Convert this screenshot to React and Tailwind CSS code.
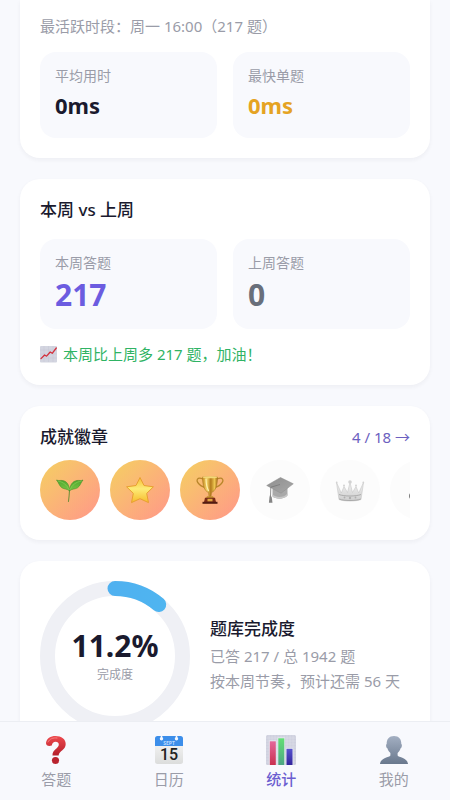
import React from "react";

function Card({ className = "", children }) {
  return (
    <section className={`rounded-[20px] bg-white p-5 shadow-[0_2px_4px_rgba(30,30,60,0.05)] ${className}`}>
      {children}
    </section>
  );
}

function Stat({ label, value, className }) {
  return (
    <div className="rounded-2xl bg-[#f8f9fd] px-[15px] pt-[15px] pb-3">
      <div className="text-[14px] leading-[18px] text-[#9a9ca8]">{label}</div>
      <div className={`font-bold ${className}`}>{value}</div>
    </div>
  );
}

function TrendIcon() {
  return (
    <svg className="h-[17px] w-[17px] shrink-0" viewBox="0 0 17 17" aria-hidden="true">
      <rect width="17" height="16.4" rx="1" fill="#d3d5e0" />
      <path d="M0 4h17M0 8h17M0 12h17M4 0v16M8.5 0v16M13 0v16" stroke="#c4c7d4" strokeWidth=".5" />
      <path d="M1 12.6L4.600 9l2 1.200L10.200 6l2 1.300L16.300 2" fill="none" stroke="#d3303c" strokeWidth="1.300" strokeLinejoin="round" strokeLinecap="round" />
    </svg>
  );
}

function Sprout() {
  return (
    <>
      <path d="M29.5 30C29.3 34 29 38 28.5 41.5" fill="none" stroke="#6b8f35" strokeWidth="1" strokeLinecap="round" />
      <path d="M16.5 20C18.500 21 20 20.200 22.500 20.500C27 21.200 29.300 25 29.500 30.800C26.500 28.500 24.500 29.300 22 27.800C19.200 26 18.800 22.500 16.500 20Z" fill="url(#leaf)" stroke="#3f8f27" strokeWidth=".6" />
      <path d="M43 20C41 21 39.500 20.200 37 20.500C32.500 21.200 29.900 25 29.500 30.800C32.500 28.500 35 29.300 37.500 27.800C40.300 26 40.700 22.500 43 20Z" fill="url(#leaf)" stroke="#3f8f27" strokeWidth=".6" />
      <path d="M18 21C23 22 27 25 29.3 30M41.5 21C36 22 32 25 29.700 30" fill="none" stroke="#8fd45c" strokeWidth=".6" />
    </>
  );
}

function Star() {
  return (
    <path
      d="M30 17.5L34 25.500L43.400 26.800L36.700 33.400L38.500 42.600L30 38.700L21.500 42.600L23.300 33.400L16.600 26.800L26 25.500Z"
      fill="url(#star)" stroke="#e8a030" strokeWidth="1" strokeLinejoin="round"
    />
  );
}

function Trophy() {
  return (
    <>
      <path d="M23 19C17 16.5 15.5 20.5 19 24C20.8 26 22.5 26.5 24.5 27.5M37 19C43 16.5 44.5 20.5 41 24C39.2 26 37.5 26.5 35.5 27.5" fill="none" stroke="#b9862a" strokeWidth="1.300" />
      <path d="M22.5 17H37.5C37.5 25.5 35.5 31 31.5 32.5L31 36.5H29L28.5 32.5C24.5 31 22.5 25.5 22.5 17Z" fill="url(#cup)" stroke="#a06c18" strokeWidth=".5" />
      <ellipse cx="30" cy="17.2" rx="7.5" ry="1" fill="#f3d878" />
      <path d="M26 19C26.2 24 27 28 28.5 30.5" fill="none" stroke="#fff0ae" strokeWidth="1.200" strokeLinecap="round" />
      <path d="M27 36.2H33L34 38H26Z" fill="#c28f2c" />
      <path d="M25 37.8H35L36 42H24Z" fill="#7b2c17" />
      <path d="M22.5 41.8H37.5V43.8H22.5Z" fill="#521c11" />
      <rect x="27.5" y="38.8" width="5" height="2.5" fill="#dfa842" />
    </>
  );
}

function GraduationCap() {
  return (
    <>
      <path d="M22.5 29V36.5C26 39.5 34 39.5 37.5 35.5V27Z" fill="#a9a9a9" />
      <path d="M22.5 34.5C26 38 34 38 37.5 33.5V35.5C34 39.5 26 39.5 22.5 36.5Z" fill="#c7c7c7" />
      <path d="M16.7 25.5L30.5 17.5L43.3 23.8L31 33.2Z" fill="url(#cap)" stroke="#8c8c8c" strokeWidth=".5" />
      <path d="M30 24.5L20.8 27.2L20.5 36" fill="none" stroke="#777" strokeWidth=".8" />
      <path d="M20 35L21.7 37L22.5 42.8H18.9L19.5 37Z" fill="#858585" />
    </>
  );
}

function Crown() {
  return (
    <>
      <path d="M16.5 22.5L21.300 33L24 26.5L27.5 32.500L30 22.500L32.5 32.500L36 26.5L38.700 33L43.5 22.5L41 39.5C36 41.5 24 41.5 19 39.5Z" fill="url(#crown)" stroke="#c6c6c6" strokeWidth=".6" strokeLinejoin="round" />
      <path d="M19 34.500C24 36.5 36 36.5 41 34.500M19.2 39C24 41 36 41 40.8 39" fill="none" stroke="#a6a6a6" strokeWidth=".9" />
      <g fill="#d2d2d2">
        <circle cx="16.7" cy="22.5" r=".9" />
        <circle cx="24" cy="25.5" r="1" />
        <circle cx="30" cy="22" r="1.800" />
        <circle cx="36" cy="25.5" r="1" />
        <circle cx="43.3" cy="22.5" r=".9" />
      </g>
      <g fill="#b0b0b0">
        <circle cx="24.5" cy="37.500" r=".9" />
        <circle cx="30" cy="38" r="1.200" />
        <circle cx="35.5" cy="37.500" r=".9" />
      </g>
    </>
  );
}

function Bomb() {
  return <ellipse cx="25" cy="36" rx="6" ry="5" fill="#777" />;
}

const badges = [
  { id: "sprout", Icon: Sprout, unlocked: true },
  { id: "star", Icon: Star, unlocked: true },
  { id: "trophy", Icon: Trophy, unlocked: true },
  { id: "cap", Icon: GraduationCap, unlocked: false },
  { id: "crown", Icon: Crown, unlocked: false },
  { id: "bomb", Icon: Bomb, unlocked: false },
];

function BadgeGradients() {
  return (
    <svg className="absolute h-0 w-0" aria-hidden="true">
      <defs>
        <linearGradient id="leaf" x1="0" y1="0" x2="0" y2="1">
          <stop offset="0" stopColor="#4fa52f" />
          <stop offset="1" stopColor="#79c844" />
        </linearGradient>
        <linearGradient id="star" x1="0" y1="0" x2="0" y2="1">
          <stop offset="0" stopColor="#f7bd35" />
          <stop offset=".45" stopColor="#fdec78" />
          <stop offset="1" stopColor="#f6bb2c" />
        </linearGradient>
        <linearGradient id="cup" x1="0" y1="0" x2="1" y2="0">
          <stop offset="0" stopColor="#c68e24" />
          <stop offset=".3" stopColor="#f5d468" />
          <stop offset=".55" stopColor="#b47a1c" />
          <stop offset=".8" stopColor="#edc550" />
          <stop offset="1" stopColor="#a8701a" />
        </linearGradient>
        <linearGradient id="cap" x1="0" y1="0" x2="1" y2="1">
          <stop offset="0" stopColor="#8e8e8e" />
          <stop offset="1" stopColor="#a8a8a8" />
        </linearGradient>
        <linearGradient id="crown" x1="0" y1="0" x2="0" y2="1">
          <stop offset="0" stopColor="#f0f0f0" />
          <stop offset="1" stopColor="#cecece" />
        </linearGradient>
      </defs>
    </svg>
  );
}

function ProgressRing({ percent }) {
  const radius = 67.5;
  const length = 2 * Math.PI * radius;
  return (
    <div className="relative h-[150px] w-[150px] shrink-0">
      <svg viewBox="0 0 150 150" className="h-full w-full -rotate-90" aria-hidden="true">
        <defs>
          <linearGradient id="ring" x1="0" y1="0" x2="0" y2="1">
            <stop offset="0" stopColor="#4facf0" />
            <stop offset="1" stopColor="#4fb6f0" />
          </linearGradient>
        </defs>
        <circle cx="75" cy="75" r={radius} fill="none" stroke="#eff0f5" strokeWidth="15" />
        <circle
          cx="75" cy="75" r={radius} fill="none" stroke="url(#ring)" strokeWidth="15" strokeLinecap="round"
          strokeDasharray={`${(length * percent) / 100} ${length}`}
        />
      </svg>
      <div className="absolute inset-0 flex flex-col items-center justify-center">
        <div className="text-[30px] leading-[38px] font-bold text-[#1a1a2e]">{percent}%</div>
        <div className="text-[12px] leading-5 text-[#9a9ca8]">完成度</div>
      </div>
    </div>
  );
}

function QuestionIcon() {
  return (
    <>
      <defs>
        <linearGradient id="question" x1="0" y1="0" x2="0" y2="1">
          <stop offset="0" stopColor="#ee4a4e" />
          <stop offset="1" stopColor="#b51f2b" />
        </linearGradient>
      </defs>
      <path d="M5 8C5.5 3.5 9.5 1 14.5 1C20.5 1 24.7 4 24.7 9C24.7 15 18.200 15.500 17.600 20.5H11.500C11.2 14.500 17.800 13.500 17.800 9.5C17.800 7.700 16.500 6.800 14.600 6.800C12.500 6.800 11.300 8 10.800 10.500C7.5 11.500 5 10.5 5 8Z" fill="url(#question)" />
      <circle cx="14.5" cy="25.500" r="3.600" fill="#b9232e" />
      <path d="M7 7C8.5 3.8 12 2.5 16 3" fill="none" stroke="#f78180" strokeWidth="1" strokeLinecap="round" />
    </>
  );
}

function CalendarIcon() {
  return (
    <>
      <defs>
        <linearGradient id="paper" x1="0" y1="0" x2="0" y2="1">
          <stop offset="0" stopColor="#fafafa" />
          <stop offset="1" stopColor="#dcdddc" />
        </linearGradient>
      </defs>
      <rect x="1" y="1" width="28" height="28" rx="2.5" fill="url(#paper)" />
      <path d="M1 11V3.5A2.5 2.5 0 0 1 3.5 1H26.5A2.5 2.5 0 0 1 29 3.5V11Z" fill="#3c8eea" />
      <circle cx="7.5" cy="3.8" r="1.700" fill="#f5f8fd" />
      <circle cx="22.5" cy="3.8" r="1.700" fill="#f5f8fd" />
      <path d="M7.5 0V3.5M22.5 0V3.5" stroke="#f5f8fd" strokeWidth="1.500" />
      <text x="15" y="10" textAnchor="middle" fontSize="5" fontWeight="700" fill="#b9daff">SEPT</text>
      <text x="15" y="25" textAnchor="middle" fontSize="16" fontWeight="500" fontFamily="Roboto, sans-serif" fill="#222">15</text>
    </>
  );
}

function ChartIcon() {
  return (
    <>
      <defs>
        <linearGradient id="pink" x1="0" y1="0" x2="0" y2="1">
          <stop offset="0" stopColor="#e4679a" />
          <stop offset="1" stopColor="#c9304f" />
        </linearGradient>
        <linearGradient id="green" x1="0" y1="0" x2="0" y2="1">
          <stop offset="0" stopColor="#62df74" />
          <stop offset="1" stopColor="#4ea684" />
        </linearGradient>
        <linearGradient id="blue" x1="0" y1="0" x2="0" y2="1">
          <stop offset="0" stopColor="#5752cf" />
          <stop offset="1" stopColor="#33259c" />
        </linearGradient>
      </defs>
      <rect width="30" height="30" rx="1.5" fill="#cfd1df" />
      <path d="M0 3h30M0 6h30M0 9h30M0 12h30M0 15h30M0 18h30M0 21h30M0 24h30M0 27h30M3 0v30M6 0v30M9 0v30M12 0v30M15 0v30M18 0v30M21 0v30M24 0v30M27 0v30" stroke="#dddfe9" strokeWidth=".6" />
      <path d="M3 5.5H10.5V30H3ZM11.5 2.5H19V30H11.5ZM19.8 13H27.2V30H19.8Z" fill="#e6e8f0" />
      <rect x="3.8" y="6.3" width="6" height="23.7" fill="url(#pink)" />
      <rect x="12.3" y="3.3" width="6" height="26.7" fill="url(#green)" />
      <rect x="20.5" y="13.8" width="6" height="16.2" fill="url(#blue)" />
    </>
  );
}

function PersonIcon() {
  return (
    <>
      <defs>
        <linearGradient id="person" x1="0" y1="0" x2="0" y2="1">
          <stop offset="0" stopColor="#a3afc2" />
          <stop offset="1" stopColor="#69788d" />
        </linearGradient>
      </defs>
      <path d="M15 1C19.8 1 22.5 4 22.3 9C23.3 9.2 23 12.8 21.6 13.3C21 15.5 19.9 16.8 18.6 18V20.5C19.5 22.5 28.5 22.5 29 29H1C1.5 22.5 10.5 22.5 11.4 20.5V18C10.1 16.8 9 15.5 8.4 13.3C7 12.8 6.7 9.2 7.7 9C7.5 4 10.2 1 15 1Z" fill="url(#person)" />
    </>
  );
}

const tabs = [
  { label: "答题", Icon: QuestionIcon },
  { label: "日历", Icon: CalendarIcon },
  { label: "统计", Icon: ChartIcon, active: true },
  { label: "我的", Icon: PersonIcon },
];

export default function App() {
  return (
    <div className="flex h-screen flex-col bg-[#f8f9fd] font-['Noto_Sans','Noto_Sans_CJK_SC',sans-serif] text-[#1a1a2e]">
      <main className="flex min-h-0 flex-1 flex-col gap-[21px] overflow-y-auto px-5 [scrollbar-width:none]">
        <Card className="shrink-0 rounded-t-none pt-[15px]">
          <p className="mb-[15px] text-[15px] leading-[22px] text-[#9a9ca8]">最活跃时段：周一 16:00（217 题）</p>
          <div className="grid grid-cols-2 gap-4">
            <Stat label="平均用时" value="0ms" className="text-[22px] leading-[41px]" />
            <Stat label="最快单题" value="0ms" className="text-[22px] leading-[41px] text-[#e5a323]" />
          </div>
        </Card>

        <Card className="shrink-0">
          <h2 className="mb-[18px] text-[17px] leading-[22px] font-medium">本周 vs 上周</h2>
          <div className="grid grid-cols-2 gap-4">
            <Stat label="本周答题" value="217" className="text-[30px] leading-[45px] text-[#6c5ce0]" />
            <Stat label="上周答题" value="0" className="text-[30px] leading-[45px] text-[#696f7b]" />
          </div>
          <p className="mt-[14px] flex items-center gap-[6px] text-[15px] leading-[22px] text-[#2fb364]">
            <TrendIcon />
            本周比上周多 217 题，加油！
          </p>
        </Card>

        <Card className="shrink-0">
          <div className="mb-3 flex items-center justify-between leading-[22px]">
            <h2 className="text-[17px] font-medium">成就徽章</h2>
            <a href="#badges" className="text-[15px] text-[#6c5fc0]">4 / 18 →</a>
          </div>
          <BadgeGradients />
          <div className="flex gap-[10px] overflow-x-auto [scrollbar-width:none]">
            {badges.map(({ id, Icon, unlocked }) => (
              <div
                key={id}
                className={`h-[60px] w-[60px] shrink-0 rounded-full ${unlocked ? "bg-linear-135 from-[#f4d05f] to-[#ff9688]" : "bg-[#fcfcfc]"}`}
              >
                <svg viewBox="0 0 60 60" aria-hidden="true">
                  <Icon />
                </svg>
              </div>
            ))}
          </div>
        </Card>

        <Card className="flex shrink-0 items-center gap-5">
          <ProgressRing percent={11.2} />
          <div>
            <h2 className="mb-1 text-[17px] leading-[22px] font-medium">题库完成度</h2>
            <p className="text-[15px] leading-[25px] text-[#9a9ca8]">已答 217 / 总 1942 题</p>
            <p className="text-[15px] leading-[25px] text-[#9a9ca8]">按本周节奏，预计还需 56 天</p>
          </div>
        </Card>
      </main>

      <nav className="grid shrink-0 grid-cols-4 border-t border-[#eceef3] bg-[#f8f9fd] pt-[13px] pb-[11px]">
        {tabs.map(({ label, Icon, active }) => (
          <button
            key={label}
            type="button"
            className={`flex flex-col items-center gap-1 text-[15px] leading-5 ${active ? "font-medium text-[#6c5fd0]" : "text-[#9a9ca8]"}`}
          >
            <svg viewBox="0 0 30 30" className="h-[30px] w-[30px]" aria-hidden="true">
              <Icon />
            </svg>
            {label}
          </button>
        ))}
      </nav>
    </div>
  );
}
